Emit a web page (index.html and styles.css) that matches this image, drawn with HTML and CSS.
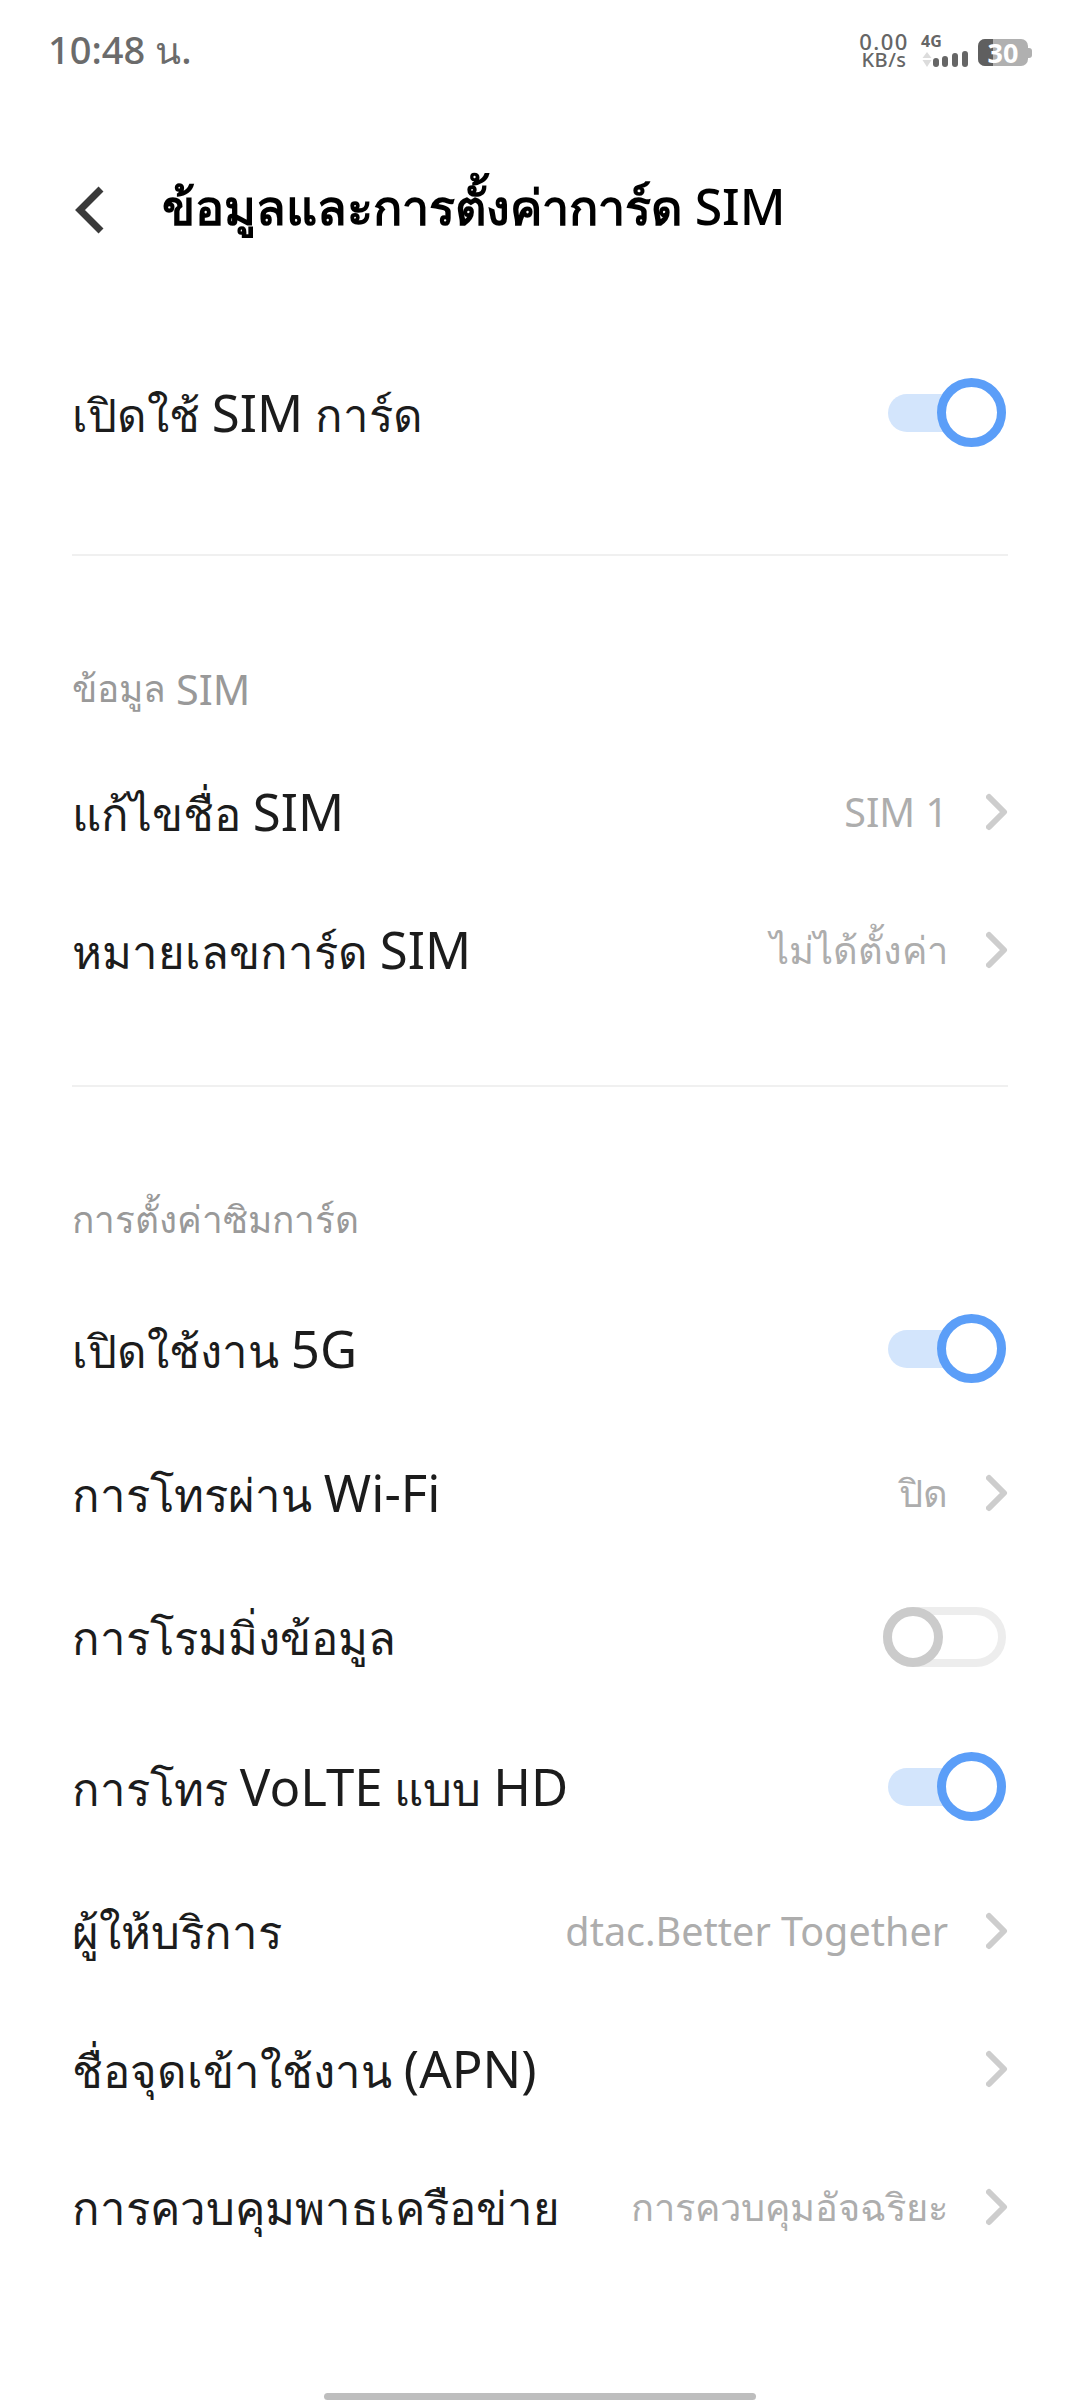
FILE: index.html
```html
<!DOCTYPE html>
<html lang="th">
<head>
    <meta charset="UTF-8">
    <meta name="viewport" content="width=device-width, initial-scale=1.0">
    <title>ข้อมูลและการตั้งค่าการ์ด SIM</title>
    <link rel="stylesheet" href="styles.css">
</head>
<body>
    <div class="screen">
        <div class="status-bar">
            <span class="time">10:48 น.</span>
            <div class="status-icons">
                <div class="net-speed">
                    <span>0.00</span>
                    <span>KB/s</span>
                </div>
                <div class="signal">
                    <span class="net-type">4G</span>
                    <svg width="47" height="17" viewBox="0 0 47 17">
                        <path d="M6 2 L10.5 8 H1.5 Z M6 17 L10.5 10 H1.5 Z" fill="#dcdcdc"/>
                        <rect x="12" y="8" width="6" height="9" rx="3" fill="#666"/>
                        <rect x="21" y="6" width="6" height="11" rx="3" fill="#666"/>
                        <rect x="31" y="3" width="6" height="14" rx="3" fill="#666"/>
                        <rect x="41" y="1" width="6" height="16" rx="3" fill="#666"/>
                    </svg>
                </div>
                <div class="battery">
                    <div class="battery-body">
                        <span class="battery-level"></span>
                        <span class="battery-text">30</span>
                    </div>
                    <span class="battery-nub"></span>
                </div>
            </div>
        </div>

        <div class="header">
            <svg class="back" width="30" height="48" viewBox="0 0 30 48">
                <path d="M27 3 L6 24 L27 45" fill="none" stroke="#3a3a3a" stroke-width="7"/>
            </svg>
            <h1>ข้อมูลและการตั้งค่าการ์ด <span class="lat">SIM</span></h1>
        </div>

        <div class="row row-toggle">
            <span class="row-label">เปิดใช้ <span class="lat">SIM</span> การ์ด</span>
            <span class="switch on"><span class="knob"></span></span>
        </div>

        <div class="divider"></div>

        <div class="section-label">ข้อมูล <span class="lat">SIM</span></div>
        <div class="row">
            <span class="row-label">แก้ไขชื่อ <span class="lat">SIM</span></span>
            <span class="row-value"><span class="lat">SIM 1</span></span>
            <svg class="chevron" width="22" height="38" viewBox="0 0 22 38"><path d="M3 4 L18 19 L3 34" fill="none" stroke="#cdcdcd" stroke-width="6" stroke-linecap="round" stroke-linejoin="round"/></svg>
        </div>
        <div class="row">
            <span class="row-label">หมายเลขการ์ด <span class="lat">SIM</span></span>
            <span class="row-value">ไม่ได้ตั้งค่า</span>
            <svg class="chevron" width="22" height="38" viewBox="0 0 22 38"><path d="M3 4 L18 19 L3 34" fill="none" stroke="#cdcdcd" stroke-width="6" stroke-linecap="round" stroke-linejoin="round"/></svg>
        </div>

        <div class="divider"></div>

        <div class="section-label">การตั้งค่าซิมการ์ด</div>
        <div class="row row-toggle">
            <span class="row-label">เปิดใช้งาน <span class="lat">5G</span></span>
            <span class="switch on"><span class="knob"></span></span>
        </div>
        <div class="row">
            <span class="row-label">การโทรผ่าน <span class="lat">Wi-Fi</span></span>
            <span class="row-value">ปิด</span>
            <svg class="chevron" width="22" height="38" viewBox="0 0 22 38"><path d="M3 4 L18 19 L3 34" fill="none" stroke="#cdcdcd" stroke-width="6" stroke-linecap="round" stroke-linejoin="round"/></svg>
        </div>
        <div class="row row-toggle">
            <span class="row-label">การโรมมิ่งข้อมูล</span>
            <span class="switch off"><span class="knob"></span></span>
        </div>
        <div class="row row-toggle">
            <span class="row-label">การโทร <span class="lat">VoLTE</span> แบบ <span class="lat">HD</span></span>
            <span class="switch on"><span class="knob"></span></span>
        </div>
        <div class="row">
            <span class="row-label">ผู้ให้บริการ</span>
            <span class="row-value"><span class="lat">dtac.Better Together</span></span>
            <svg class="chevron" width="22" height="38" viewBox="0 0 22 38"><path d="M3 4 L18 19 L3 34" fill="none" stroke="#cdcdcd" stroke-width="6" stroke-linecap="round" stroke-linejoin="round"/></svg>
        </div>
        <div class="row">
            <span class="row-label">ชื่อจุดเข้าใช้งาน <span class="lat">(APN)</span></span>
            <svg class="chevron" width="22" height="38" viewBox="0 0 22 38"><path d="M3 4 L18 19 L3 34" fill="none" stroke="#cdcdcd" stroke-width="6" stroke-linecap="round" stroke-linejoin="round"/></svg>
        </div>
        <div class="row">
            <span class="row-label">การควบคุมพาธเครือข่าย</span>
            <span class="row-value">การควบคุมอัจฉริยะ</span>
            <svg class="chevron" width="22" height="38" viewBox="0 0 22 38"><path d="M3 4 L18 19 L3 34" fill="none" stroke="#cdcdcd" stroke-width="6" stroke-linecap="round" stroke-linejoin="round"/></svg>
        </div>

        <div class="home-bar"></div>
    </div>
</body>
</html>
```
FILE: styles.css
```css
body {
    margin: 0;
    background: #fff;
    font-family: "Noto Sans", "Open Sans", "DejaVu Sans", sans-serif;
    color: #1c1c1c;
}
.screen {
    position: relative;
    width: 1080px;
    height: 2400px;
    overflow: hidden;
    padding: 0 72px;
    box-sizing: border-box;
}
.lat {
    font-size: 1.12em;
}
.status-bar {
    display: flex;
    justify-content: space-between;
    align-items: center;
    height: 100px;
    margin: 0 -24px 0 -24px;
}
.time {
    font-size: 38px;
    font-weight: 500;
    color: #6b6b6b;
}
.status-icons {
    display: flex;
    align-items: center;
}
.net-speed {
    display: flex;
    flex-direction: column;
    align-items: center;
    width: 50px;
    font-size: 20px;
    line-height: 18px;
    font-weight: 500;
    letter-spacing: 0.5px;
    color: #666;
}
.net-speed span:first-child {
    font-size: 22px;
    line-height: 20px;
    letter-spacing: 1.5px;
}
.signal {
    display: flex;
    flex-direction: column;
    align-items: flex-start;
    margin-left: 12px;
}
.signal svg {
    display: block;
}
.net-type {
    font-size: 16px;
    line-height: 18px;
    font-weight: 700;
    color: #666;
    margin-top: -2px;
}
.battery {
    display: flex;
    align-items: center;
    margin: 5px 0 0 10px;
}
.battery-body {
    position: relative;
    width: 50px;
    height: 27px;
    border-radius: 7px;
    background: #b0b0b0;
    text-align: center;
}
.battery-level {
    position: absolute;
    left: 0;
    top: 0;
    bottom: 0;
    width: 15px;
    background: #5f5f5f;
    border-radius: 7px 0 0 7px;
}
.battery-text {
    position: relative;
    display: block;
    font-size: 27px;
    line-height: 27px;
    font-weight: 700;
    color: #fff;
}
.battery-nub {
    width: 4px;
    height: 10px;
    background: #b0b0b0;
    border-radius: 0 3px 3px 0;
}
.header {
    display: flex;
    align-items: center;
    gap: 58px;
    height: 124px;
    margin: 48px 0 66px;
    padding-left: 2px;
}
.back {
    flex-shrink: 0;
}
.header h1 {
    margin: 0 0 5px;
    font-size: 48.5px;
    font-weight: 700;
    color: #000;
}
.header h1 .lat {
    font-size: 1.03em;
    font-weight: 500;
}
.row {
    display: flex;
    align-items: center;
    height: 138px;
}
.row-toggle {
    height: 150px;
}
.row-label {
    font-size: 45.5px;
    flex: 1;
    margin-top: 3px;
}
.row-value {
    font-size: 38px;
    color: #adadad;
    margin-right: 38px;
}
.row-value .lat {
    font-size: 1.04em;
}
.switch {
    position: relative;
    display: block;
    box-sizing: border-box;
    margin-right: 2px;
}
.switch.on {
    width: 118px;
    height: 38px;
    border-radius: 19px;
    background: #d3e5fc;
}
.switch.off {
    width: 123px;
    height: 60px;
    border-radius: 30px;
    border: 8px solid #ededed;
}
.knob {
    position: absolute;
    width: 69px;
    height: 69px;
    box-sizing: border-box;
    border-radius: 50%;
    background: #fff;
    border: 9px solid #5b9ef8;
    right: 0;
    top: -16px;
}
.switch.off .knob {
    width: 60px;
    height: 60px;
    left: -8px;
    right: auto;
    top: -8px;
    border-color: #cbcbcb;
}
.divider {
    height: 2px;
    background: #f0f0f0;
    margin-top: 66px;
}
.section-label {
    font-size: 37px;
    color: #999;
    height: 120px;
    margin-top: 67px;
    padding-top: 11px;
    box-sizing: border-box;
    display: flex;
    align-items: center;
    gap: 10px;
}
.home-bar {
    position: absolute;
    left: 324px;
    bottom: 0;
    width: 432px;
    height: 7px;
    background: #bebebe;
    border-radius: 4px;
}
```
